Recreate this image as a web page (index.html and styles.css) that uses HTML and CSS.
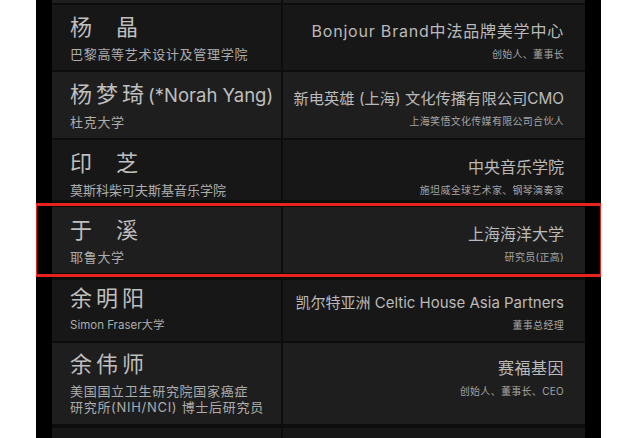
FILE: index.html
```html
<!DOCTYPE html>
<html lang="zh-CN">
<head>
<meta charset="utf-8">
<title>名单</title>
<link rel="stylesheet" href="styles.css">
</head>
<body>
<div class="panel">
  <div class="list">
    <div class="row row-light row-edge">
      <div class="cell left"></div>
      <div class="cell right"></div>
    </div>

    <div class="row row-dark">
      <div class="cell left">
        <div class="name wide">杨晶</div>
        <div class="sub">巴黎高等艺术设计及管理学院</div>
      </div>
      <div class="cell right">
        <div class="org org-spaced">Bonjour Brand中法品牌美学中心</div>
        <div class="title">创始人、董事长</div>
      </div>
    </div>

    <div class="row row-light">
      <div class="cell left">
        <div class="name">杨梦琦<span class="en">(*Norah Yang)</span></div>
        <div class="sub">杜克大学</div>
      </div>
      <div class="cell right">
        <div class="org org-mid">新电英雄 (上海) 文化传播有限公司CMO</div>
        <div class="title">上海笑悟文化传媒有限公司合伙人</div>
      </div>
    </div>

    <div class="row row-dark row-short">
      <div class="cell left">
        <div class="name wide">印芝</div>
        <div class="sub sub-tight">莫斯科柴可夫斯基音乐学院</div>
      </div>
      <div class="cell right">
        <div class="org">中央音乐学院</div>
        <div class="title">施坦威全球艺术家、钢琴演奏家</div>
      </div>
    </div>

    <div class="row row-light row-marked">
      <div class="cell left">
        <div class="name wide">于溪</div>
        <div class="sub">耶鲁大学</div>
      </div>
      <div class="cell right">
        <div class="org">上海海洋大学</div>
        <div class="title">研究员(正高)</div>
      </div>
      <div class="highlight"></div>
    </div>

    <div class="row row-dark row-high">
      <div class="cell left">
        <div class="name">余明阳</div>
        <div class="sub sub-latin">Simon Fraser大学</div>
      </div>
      <div class="cell right">
        <div class="org org-small">凯尔特亚洲 Celtic House Asia Partners</div>
        <div class="title">董事总经理</div>
      </div>
    </div>

    <div class="row row-light row-tall">
      <div class="cell left">
        <div class="name">余伟师</div>
        <div class="sub">美国国立卫生研究院国家癌症<br>研究所(NIH/NCI) 博士后研究员</div>
      </div>
      <div class="cell right">
        <div class="org org-wide">赛福基因</div>
        <div class="title">创始人、董事长、CEO</div>
      </div>
    </div>

    <div class="row row-dark row-edge">
      <div class="cell left"></div>
      <div class="cell right"></div>
    </div>
  </div>
</div>
</body>
</html>
```

FILE: styles.css
```css
html, body {
  margin: 0;
  padding: 0;
  background: #ffffff;
  height: 438px;
  overflow: hidden;
}

body {
  font-family: "Inter", "Noto Sans CJK SC", sans-serif;
}

.panel {
  margin-left: 36px;
  width: 565px;
  height: 438px;
  background: #000000;
  overflow: hidden;
}

.list {
  margin: -57px 16px 0;
  display: flex;
  flex-direction: column;
  gap: 2px;
  background: #0d0d0d;
}

.row {
  display: grid;
  grid-template-columns: 229px 1fr;
  column-gap: 2px;
  background: #0d0d0d;
}

.row-edge {
  height: 60px;
}

.cell {
  padding-top: 8px;
  padding-bottom: 8px;
}

.row-dark .cell {
  background: #171717;
}

.row-light .cell {
  background: #1e1e1e;
}

.left {
  padding-left: 18px;
}

.right {
  padding-right: 21px;
  text-align: right;
}

.name {
  font-size: 22px;
  line-height: 28px;
  letter-spacing: 4px;
  color: #bfbfbf;
  white-space: nowrap;
}

.name.wide {
  letter-spacing: 24px;
}

.name .en {
  font-size: 18.5px;
  letter-spacing: 0;
}

.sub {
  margin-top: 5px;
  font-size: 13px;
  line-height: 16px;
  letter-spacing: 0.7px;
  color: #adadad;
  white-space: nowrap;
}

.sub-tight {
  letter-spacing: 0;
}

.sub-latin {
  font-size: 11.5px;
  letter-spacing: 0;
}

.org {
  margin-top: 8px;
  font-size: 16px;
  line-height: 21px;
  color: #bababa;
  white-space: nowrap;
}

.org-spaced {
  letter-spacing: 0.8px;
}

.org-mid {
  font-size: 15.3px;
}

.org-small {
  font-size: 15px;
}

.org-wide {
  letter-spacing: 0.5px;
}

.title {
  margin-top: 5px;
  font-size: 10px;
  line-height: 14px;
  letter-spacing: 0.3px;
  color: #a4a4a4;
  white-space: nowrap;
}

.row-short .cell {
  padding-top: 9px;
  padding-bottom: 2px;
}

.row-marked {
  position: relative;
  margin-top: 5px;
  margin-bottom: 5px;
}

.row-marked .cell {
  padding-top: 9px;
  padding-bottom: 8px;
}

.row-high .cell {
  padding-top: 4px;
  padding-bottom: 8px;
}

.row-tall {
  margin-bottom: 2px;
}

.row-tall .cell {
  padding-top: 7px;
  padding-bottom: 9px;
}

.highlight {
  position: absolute;
  left: -18px;
  right: -18px;
  top: -4px;
  bottom: -4px;
  border: 3px solid #e8221d;
  border-radius: 2px;
  pointer-events: none;
}
```
